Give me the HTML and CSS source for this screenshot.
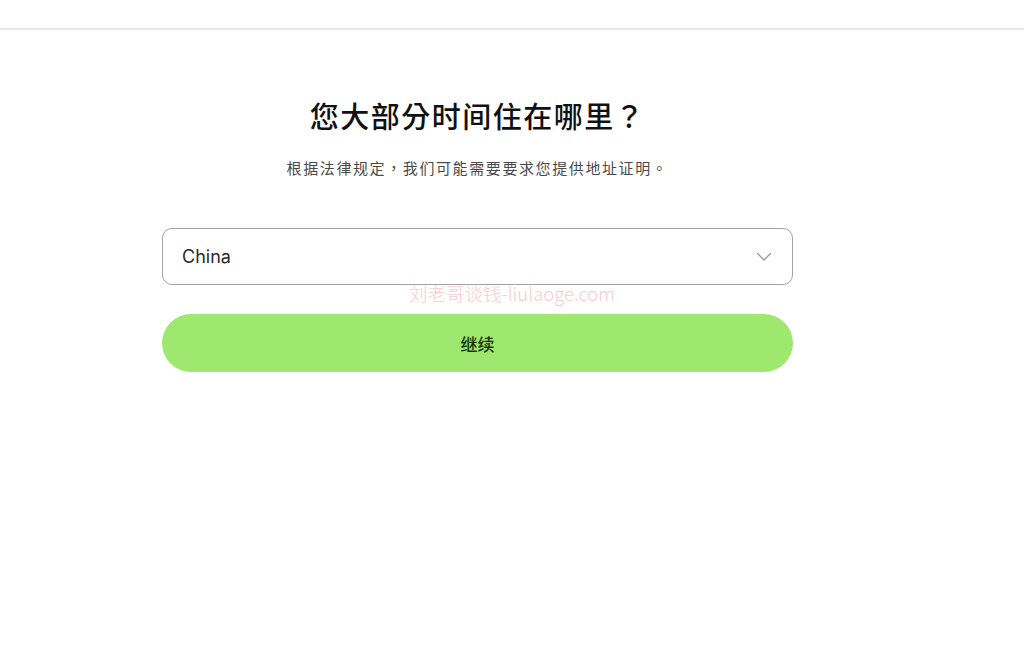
FILE: index.html
```html
<!DOCTYPE html>
<html lang="zh-CN">
<head>
<meta charset="utf-8">
<title>您大部分时间住在哪里？</title>
<link rel="stylesheet" href="styles.css">
</head>
<body>
<header class="topbar"></header>
<main class="page">
  <section class="column">
    <h1 class="title" lang="zh-TW">您大部分时间住在哪里？</h1>
    <p class="subtitle" lang="zh-TW">根据法律规定，我们可能需要要求您提供地址证明。</p>
    <div class="select">
      <span class="select-value">China</span>
      <svg class="chevron" width="16" height="10" viewBox="0 0 16 10" fill="none">
        <path d="M1.5 1.5 L8 8 L14.5 1.5" stroke="#9a9a9a" stroke-width="1.3" stroke-linecap="round" stroke-linejoin="round"/>
      </svg>
    </div>
    <button class="continue">继续</button>
  </section>
</main>
<div class="watermark">刘老哥谈钱-liulaoge.com</div>
</body>
</html>
```
FILE: styles.css
```css
html, body {
  margin: 0;
  padding: 0;
  background: #ffffff;
}
body {
  position: relative;
  min-height: 665px;
  font-family: "Inter", "Noto Sans CJK SC", sans-serif;
  color: #0e0f0c;
}
.topbar {
  height: 28px;
  border-bottom: 2px solid #e8e8e8;
}
.page {
  display: flex;
  padding-left: 162px;
}
.column {
  width: 631px;
  display: flex;
  flex-direction: column;
  align-items: stretch;
}
.title {
  margin: 65px 0 0;
  text-align: center;
  font-family: "Noto Sans CJK TC", "Noto Sans CJK SC", sans-serif;
  font-size: 29px;
  font-weight: 500;
  line-height: 40px;
  color: #111111;
  letter-spacing: 1.5px;
}
.subtitle {
  margin: 23px 0 0;
  text-align: center;
  font-family: "Noto Sans CJK TC", "Noto Sans CJK SC", sans-serif;
  font-size: 15px;
  line-height: 20px;
  color: #4a4a4a;
  letter-spacing: 1.6px;
}
.select {
  box-sizing: border-box;
  margin-top: 50px;
  height: 57px;
  border: 1.5px solid #a3a3a3;
  border-radius: 10px;
  display: flex;
  align-items: center;
  justify-content: space-between;
  padding: 0 20px 0 19px;
}
.select-value {
  font-family: "Inter", sans-serif;
  font-size: 18px;
  color: #2a2a2a;
}
.chevron {
  display: block;
}
.continue {
  margin-top: 29px;
  height: 58px;
  border: none;
  border-radius: 29px;
  background: #9fe870;
  color: #163300;
  font-family: "Noto Sans CJK SC", sans-serif;
  font-size: 17px;
  font-weight: 500;
  cursor: pointer;
}
.watermark {
  position: absolute;
  top: 282px;
  left: 0;
  right: 0;
  text-align: center;
  font-family: "Noto Sans CJK SC", sans-serif;
  font-size: 18.5px;
  font-weight: 300;
  line-height: 22px;
  color: #f9cccc;
  pointer-events: none;
}
```
